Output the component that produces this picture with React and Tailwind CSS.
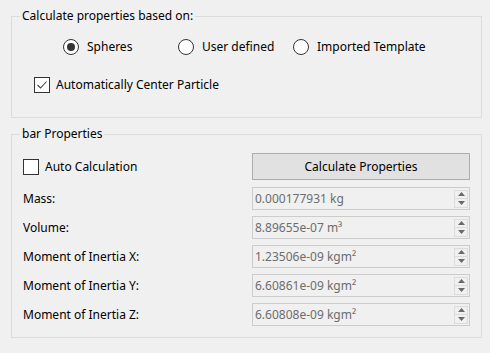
import React from 'react';

const font = { fontFamily: '"Noto Sans", "Liberation Sans", sans-serif' };

function Radio({ checked, label }) {
    return (
        <div className="flex items-center gap-[8px]">
            <span className="w-[16px] h-[16px] rounded-full border border-[#333333] bg-white flex items-center justify-center">
                {checked && <span className="w-[8px] h-[8px] rounded-full bg-[#333333]" />}
            </span>
            <span>{label}</span>
        </div>
    );
}

function Check({ checked, label }) {
    return (
        <div className="flex items-center gap-[6px]">
            <span className="w-[16px] h-[16px] border border-[#333333] bg-white flex items-center justify-center">
                {checked && (
                    <svg width="12" height="12" viewBox="0 0 12 12">
                        <polyline points="1.5,6 4.5,9 10.5,2.5" fill="none" stroke="#444444" strokeWidth="1.1" />
                    </svg>
                )}
            </span>
            <span>{label}</span>
        </div>
    );
}

function Spin({ value }) {
    return (
        <div className="h-[23px] w-[218px] border border-[#cccccc] bg-[#f0f0f0] flex items-center justify-between pl-[2px] pr-[1px]">
            <span className="text-[#6d6d6d]">{value}</span>
            <div className="flex flex-col">
                <span className="w-[14px] h-[9px] border border-[#dcdcdc] flex items-center justify-center">
                    <svg width="7" height="4" viewBox="0 0 7 4"><polygon points="0,4 7,4 3.5,0" fill="#6a6a6a" /></svg>
                </span>
                <span className="w-[14px] h-[9px] border border-[#dcdcdc] border-t-0 flex items-center justify-center">
                    <svg width="7" height="4" viewBox="0 0 7 4"><polygon points="0,0 7,0 3.5,4" fill="#6a6a6a" /></svg>
                </span>
            </div>
        </div>
    );
}

const rows = [
    ['Mass:', '0.000177931 kg'],
    ['Volume:', '8.89655e-07 m³'],
    ['Moment of Inertia X:', '1.23506e-09 kgm²'],
    ['Moment of Inertia Y:', '6.60861e-09 kgm²'],
    ['Moment of Inertia Z:', '6.60808e-09 kgm²'],
];

export default function App() {
    return (
        <div className="w-[490px] h-[353px] bg-[#f0f0f0] text-[12px] text-black pt-[7px] pl-[11px]" style={font}>
            <fieldset className="w-[471px] border border-[#dcdcdc] pt-[13px] pb-[23px] px-[11px]">
                <legend className="-ml-[3px] px-[2px] leading-[18px]">Calculate properties based on:</legend>
                <div className="pl-[11px]">
                    <div className="grid grid-cols-[115px_115px_auto] h-[16px] items-center pl-[29px]">
                        <Radio checked label="Spheres" />
                        <Radio label="User defined" />
                        <Radio label="Imported Template" />
                    </div>
                    <div className="mt-[22px]">
                        <Check checked label="Automatically Center Particle" />
                    </div>
                </div>
            </fieldset>

            <fieldset className="w-[471px] mt-[7px] border border-[#dcdcdc] pt-[10px] pb-[11px] px-[11px]">
                <legend className="-ml-[3px] px-[2px] leading-[18px]">bar Properties</legend>
                <div className="flex items-center justify-between h-[27px]">
                    <Check label="Auto Calculation" />
                    <button className="h-[27px] w-[218px] bg-[#e1e1e1] border border-[#adadad]">Calculate Properties</button>
                </div>
                <div className="mt-[7px] flex flex-col gap-[6px]">
                    {rows.map(([label, value]) => (
                        <div key={label} className="flex items-center justify-between">
                            <span>{label}</span>
                            <Spin value={value} />
                        </div>
                    ))}
                </div>
            </fieldset>
        </div>
    );
}
